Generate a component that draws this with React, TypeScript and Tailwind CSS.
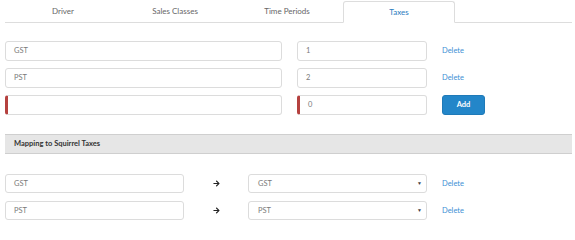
import { FaArrowRight } from "react-icons/fa";

const font = { fontFamily: "Lato, 'Open Sans', sans-serif" };

function Tab({ label, active }: { label: string; active?: boolean }) {
  if (active) {
    return (
      <li className="w-[112px] h-[22px] mt-[1px] -mb-px flex items-center justify-center bg-white border border-[#dddddd] border-b-white rounded-t-[3px] text-[#2a7cc0] text-[8px] leading-none">
        {label}
      </li>
    );
  }
  return (
    <li className="w-[112px] h-[22px] flex items-center justify-center text-[#666666] text-[8px] leading-none">
      {label}
    </li>
  );
}

function TextBox({ value, invalid, className }: { value: string; invalid?: boolean; className: string }) {
  return (
    <div
      className={
        "flex items-center pl-[8px] rounded-[3px] border border-[#dcdcdc] bg-white text-[#7a7a7a] text-[7.5px] leading-none " +
        (invalid ? "border-l-[3px] border-l-[#b5413f] pl-[7px] " : "") +
        className
      }
    >
      {value}
    </div>
  );
}

function DeleteLink() {
  return <a className="ml-[15px] text-[#3d8fd4] text-[7.5px] leading-none cursor-pointer">Delete</a>;
}

export default function App() {
  return (
    <div className="w-[575px] h-[225px] bg-white overflow-hidden leading-none" style={font}>
      {/* Tabs */}
      <div className="pl-[5px] pr-[3px]">
        <ul className="flex pl-[2px] border-b border-[#dddddd] h-[23px] items-end">
          <Tab label="Driver" />
          <Tab label="Sales Classes" />
          <Tab label="Time Periods" />
          <Tab label="Taxes" active />
        </ul>
      </div>

      {/* Tax rows */}
      <div className="px-[5px] pt-[18px] flex flex-col gap-[7px]">
        <div className="flex items-center h-[20px]">
          <TextBox value="GST" className="w-[277px] h-[20px]" />
          <TextBox value="1" className="w-[130px] h-[20px] ml-[15px]" />
          <DeleteLink />
        </div>
        <div className="flex items-center h-[20px]">
          <TextBox value="PST" className="w-[277px] h-[20px]" />
          <TextBox value="2" className="w-[130px] h-[20px] ml-[15px]" />
          <DeleteLink />
        </div>
        <div className="flex items-center h-[20px]">
          <TextBox value="" invalid className="w-[277px] h-[20px]" />
          <TextBox value="0" invalid className="w-[130px] h-[20px] ml-[15px]" />
          <button className="ml-[15px] w-[43px] h-[20px] rounded-[3px] bg-[#2386c9] border border-[#1f7ab8] text-white text-[7.5px] font-bold leading-none">
            Add
          </button>
        </div>
      </div>

      {/* Mapping header */}
      <div className="ml-[5px] mr-[3px] mt-[19px] h-[20px] flex items-center pl-[9px] bg-[#e6e6e6] border-y border-[#cfcfcf] text-[#333333] text-[7.5px] font-bold">
        Mapping to Squirrel Taxes
      </div>

      {/* Mapping rows */}
      <div className="px-[5px] pt-[20px] flex flex-col gap-[8px]">
        {["GST", "PST"].map((t) => (
          <div key={t} className="flex items-center h-[19px]">
            <TextBox value={t} className="w-[179px] h-[19px]" />
            <div className="w-[64px] flex justify-center">
              <FaArrowRight className="w-[7px] h-[7px] text-[#222222]" />
            </div>
            <div className="w-[179px] h-[19px] flex items-center justify-between pl-[9px] pr-[4px] rounded-[3px] border border-[#dcdcdc] bg-white text-[#7a7a7a] text-[7.5px]">
              <span>{t}</span>
              <span className="text-[#444444] text-[5px]">▼</span>
            </div>
            <DeleteLink />
          </div>
        ))}
      </div>
    </div>
  );
}
